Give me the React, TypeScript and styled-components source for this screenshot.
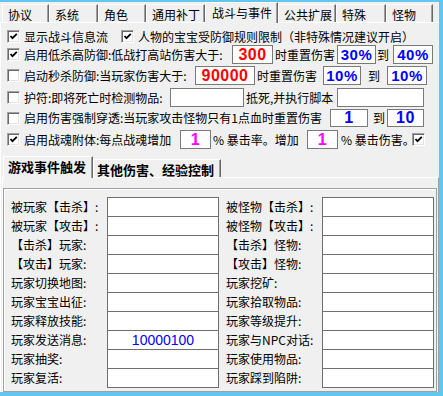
import React from "react";
import styled, { createGlobalStyle } from "styled-components";

const GlobalStyle = createGlobalStyle`
  html, body {
    margin: 0;
    padding: 0;
  }
  body {
    font-family: "Noto Sans CJK SC", "Noto Sans", sans-serif;
    font-size: 12px;
    color: #000;
  }
`;

const Frame = styled.div`
  width: 443px;
  height: 396px;
  box-sizing: border-box;
  padding: 2px 4px 4px 0;
  background: #62c6ee;
  overflow: hidden;
`;

const Window = styled.div`
  height: 100%;
  background: #f0f0f0;
  display: flex;
  flex-direction: column;
  overflow: hidden;
`;

const TabStrip = styled.div<{ $h: number; $pl: number }>`
  display: flex;
  align-items: flex-end;
  height: ${(p) => p.$h}px;
  padding-left: ${(p) => p.$pl}px;
  position: relative;
  z-index: 1;
  flex: none;
`;

type TabProps = {
  $w: number;
  $h: number;
  $active?: boolean;
  $pl: number;
  $bold?: boolean;
};

const Tab = styled.div<TabProps>`
  box-sizing: border-box;
  flex: none;
  width: ${(p) => p.$w}px;
  height: ${(p) => p.$h}px;
  margin-bottom: ${(p) => (p.$active ? -1 : 0)}px;
  padding-left: ${(p) => p.$pl}px;
  padding-top: ${(p) => (p.$active ? 0 : 2)}px;
  padding-bottom: ${(p) => (p.$active ? 2 : 0)}px;
  display: flex;
  align-items: center;
  background: #f0f0f0;
  border-top: 1px solid #fff;
  border-left: 1px solid #fff;
  border-right: 1px solid #696969;
  box-shadow: inset -1px 0 #a0a0a0;
  font-size: ${(p) => (p.$bold ? 13 : 12)}px;
  font-weight: ${(p) => (p.$bold ? 700 : 400)};
  white-space: nowrap;
`;

const Page = styled.div`
  flex: 1;
  min-height: 0;
  display: flex;
  flex-direction: column;
  border-top: 1px solid #fff;
  border-left: 1px solid #fff;
`;

const Row = styled.div<{ $mt: number; $h: number }>`
  display: flex;
  align-items: center;
  height: ${(p) => p.$h}px;
  margin-top: ${(p) => p.$mt}px;
  padding-left: 6px;
  white-space: nowrap;
  flex: none;
`;

const Txt = styled.span<{ $w?: number; $ml?: number; $pl?: number }>`
  flex: none;
  box-sizing: border-box;
  ${(p) => (p.$w ? `width: ${p.$w}px;` : "")}
  margin-left: ${(p) => p.$ml ?? 0}px;
  padding-left: ${(p) => p.$pl ?? 0}px;
  line-height: 16px;
`;

const Box = styled.div<{ $w: number; $color?: string; $size?: number }>`
  flex: none;
  box-sizing: border-box;
  width: ${(p) => p.$w}px;
  height: 100%;
  background: #fff;
  border: 1px solid #7a7a7a;
  color: ${(p) => p.$color ?? "#000"};
  font-family: "Liberation Sans", Arial, sans-serif;
  font-weight: 700;
  font-size: ${(p) => p.$size ?? 16}px;
  letter-spacing: 0.5px;
  display: flex;
  align-items: center;
  justify-content: center;
`;

const CheckSquare = styled.span`
  flex: none;
  box-sizing: border-box;
  width: 13px;
  height: 13px;
  background: #fff;
  border: 1px solid;
  border-color: #a0a0a0 #fff #fff #a0a0a0;
  box-shadow: inset 1px 1px #696969, inset -1px -1px #e3e3e3;
  display: flex;
  align-items: center;
  justify-content: center;
`;

const Check = ({ on }: { on?: boolean }) => (
  <CheckSquare>
    {on && (
      <svg width="9" height="9" viewBox="0 0 9 9">
        <polyline
          points="1.5,4 3.5,6.2 7.8,1.8"
          fill="none"
          stroke="#000"
          strokeWidth="1.8"
        />
      </svg>
    )}
  </CheckSquare>
);

const InnerPanel = styled.div`
  flex: 1;
  min-height: 0;
  margin-left: 1px;
  padding: 10px 1px 0 0;
  border-top: 1px solid #fff;
  border-left: 1px solid #fff;
  border-right: 1px solid #a0a0a0;
`;

const GroupBox = styled.div`
  height: 100%;
  box-sizing: border-box;
  padding: 8px 2px 0 7px;
  border: 1px solid #a0a0a0;
  box-shadow: inset 1px 1px #fff;
  display: flex;
  gap: 7px;
`;

const FieldColumn = styled.div`
  display: grid;
  grid-template-columns: 96px 112px;
  grid-auto-rows: 19px;
  align-content: start;
`;

const FieldLabel = styled.span`
  display: flex;
  align-items: center;
  white-space: nowrap;
  font-size: 12px;
`;

const FieldInput = styled.div<{ $color?: string }>`
  box-sizing: border-box;
  height: 20px;
  background: #fff;
  border: 1px solid #6e6e6e;
  color: ${(p) => p.$color ?? "#000"};
  font-family: "Liberation Sans", Arial, sans-serif;
  font-size: 14px;
  display: flex;
  align-items: center;
  justify-content: center;
`;

const topTabs = [
  { label: "协议", w: 47 },
  { label: "系统", w: 49 },
  { label: "角色", w: 48 },
  { label: "通用补丁", w: 59 },
  { label: "战斗与事件", w: 73, active: true },
  { label: "公共扩展", w: 58 },
  { label: "特殊", w: 50 },
  { label: "怪物", w: 47 },
];

const leftFields: [string, string][] = [
  ["被玩家【击杀】:", ""],
  ["被玩家【攻击】:", ""],
  ["【击杀】玩家:", ""],
  ["【攻击】玩家:", ""],
  ["玩家切换地图:", ""],
  ["玩家宝宝出征:", ""],
  ["玩家释放技能:", ""],
  ["玩家发送消息:", "10000100"],
  ["玩家抽奖:", ""],
  ["玩家复活:", ""],
];

const rightFields: [string, string][] = [
  ["被怪物【击杀】:", ""],
  ["被怪物【攻击】:", ""],
  ["【击杀】怪物:", ""],
  ["【攻击】怪物:", ""],
  ["玩家挖矿:", ""],
  ["玩家拾取物品:", ""],
  ["玩家等级提升:", ""],
  ["玩家与NPC对话:", ""],
  ["玩家使用物品:", ""],
  ["玩家踩到陷阱:", ""],
];

const renderFields = (fields: [string, string][]) =>
  fields.map(([label, value]) => (
    <React.Fragment key={label}>
      <FieldLabel>{label}</FieldLabel>
      <FieldInput $color="#0000ff">{value}</FieldInput>
    </React.Fragment>
  ));

const App = () => {
  return (
    <>
      <GlobalStyle />
      <Frame>
        <Window>
          <TabStrip $h={20} $pl={2}>
            {topTabs.map((t) => (
              <Tab
                key={t.label}
                $w={t.w}
                $h={t.active ? 21 : 18}
                $active={t.active}
                $pl={t.active ? 6 : 5}
              >
                {t.label}
              </Tab>
            ))}
          </TabStrip>
          <Page>
            <Row $mt={5} $h={17}>
              <Check on />
              <Txt $w={97} $ml={4}>
                显示战斗信息流
              </Txt>
              <Check on />
              <Txt $ml={4}>人物的宝宝受防御规则限制（非特殊情况建议开启）</Txt>
            </Row>
            <Row $mt={0} $h={19}>
              <Check on />
              <Txt $w={208} $ml={4}>
                启用低杀高防御:低战打高站伤害大于:
              </Txt>
              <Box $w={41} $color="#ff0000">
                300
              </Box>
              <Txt $w={62} $ml={2}>
                时重置伤害
              </Txt>
              <Box $w={39} $color="#0000ff" $size={15}>
                30%
              </Box>
              <Txt $w={16} $ml={1}>
                到
              </Txt>
              <Box $w={40} $color="#0000ff" $size={15}>
                40%
              </Box>
            </Row>
            <Row $mt={2} $h={19}>
              <Check />
              <Txt $w={171} $ml={4}>
                启动秒杀防御:当玩家伤害大于:
              </Txt>
              <Box $w={60} $color="#ff0000">
                90000
              </Box>
              <Txt $w={66} $ml={2}>
                时重置伤害
              </Txt>
              <Box $w={38} $color="#0000ff" $size={15}>
                10%
              </Box>
              <Txt $w={26} $pl={7}>
                到
              </Txt>
              <Box $w={40} $color="#0000ff" $size={15}>
                10%
              </Box>
            </Row>
            <Row $mt={3} $h={19}>
              <Check />
              <Txt $w={146} $ml={4}>
                护符:即将死亡时检测物品:
              </Txt>
              <Box $w={74} />
              <Txt $w={91} $ml={2}>
                抵死,并执行脚本
              </Txt>
              <Box $w={87} />
            </Row>
            <Row $mt={2} $h={18}>
              <Check />
              <Txt $w={306} $ml={4}>
                启用伤害强制穿透:当玩家攻击怪物只有1点血时重置伤害
              </Txt>
              <Box $w={38} $color="#0000ff">
                1
              </Box>
              <Txt $w={19} $pl={5}>
                到
              </Txt>
              <Box $w={37} $color="#0000ff">
                10
              </Box>
            </Row>
            <Row $mt={3} $h={19}>
              <Check on />
              <Txt $w={156} $ml={4}>
                启用战魂附体:每点战魂增加
              </Txt>
              <Box $w={31} $color="#ff00ff">
                1
              </Box>
              <Txt $w={94} $ml={2}>
                % 暴击率。增加
              </Txt>
              <Box $w={31} $color="#ff00ff">
                1
              </Box>
              <Txt $w={71} $ml={3}>
                % 暴击伤害。
              </Txt>
              <Check on />
            </Row>
            <TabStrip $h={22} $pl={2} style={{ marginTop: 6 }}>
              <Tab $w={90} $h={22} $active $pl={4} $bold>
                游戏事件触发
              </Tab>
              <Tab $w={128} $h={18} $pl={3} $bold>
                其他伤害、经验控制
              </Tab>
            </TabStrip>
            <InnerPanel>
              <GroupBox>
                <FieldColumn>{renderFields(leftFields)}</FieldColumn>
                <FieldColumn>{renderFields(rightFields)}</FieldColumn>
              </GroupBox>
            </InnerPanel>
          </Page>
        </Window>
      </Frame>
    </>
  );
};

export default App;
